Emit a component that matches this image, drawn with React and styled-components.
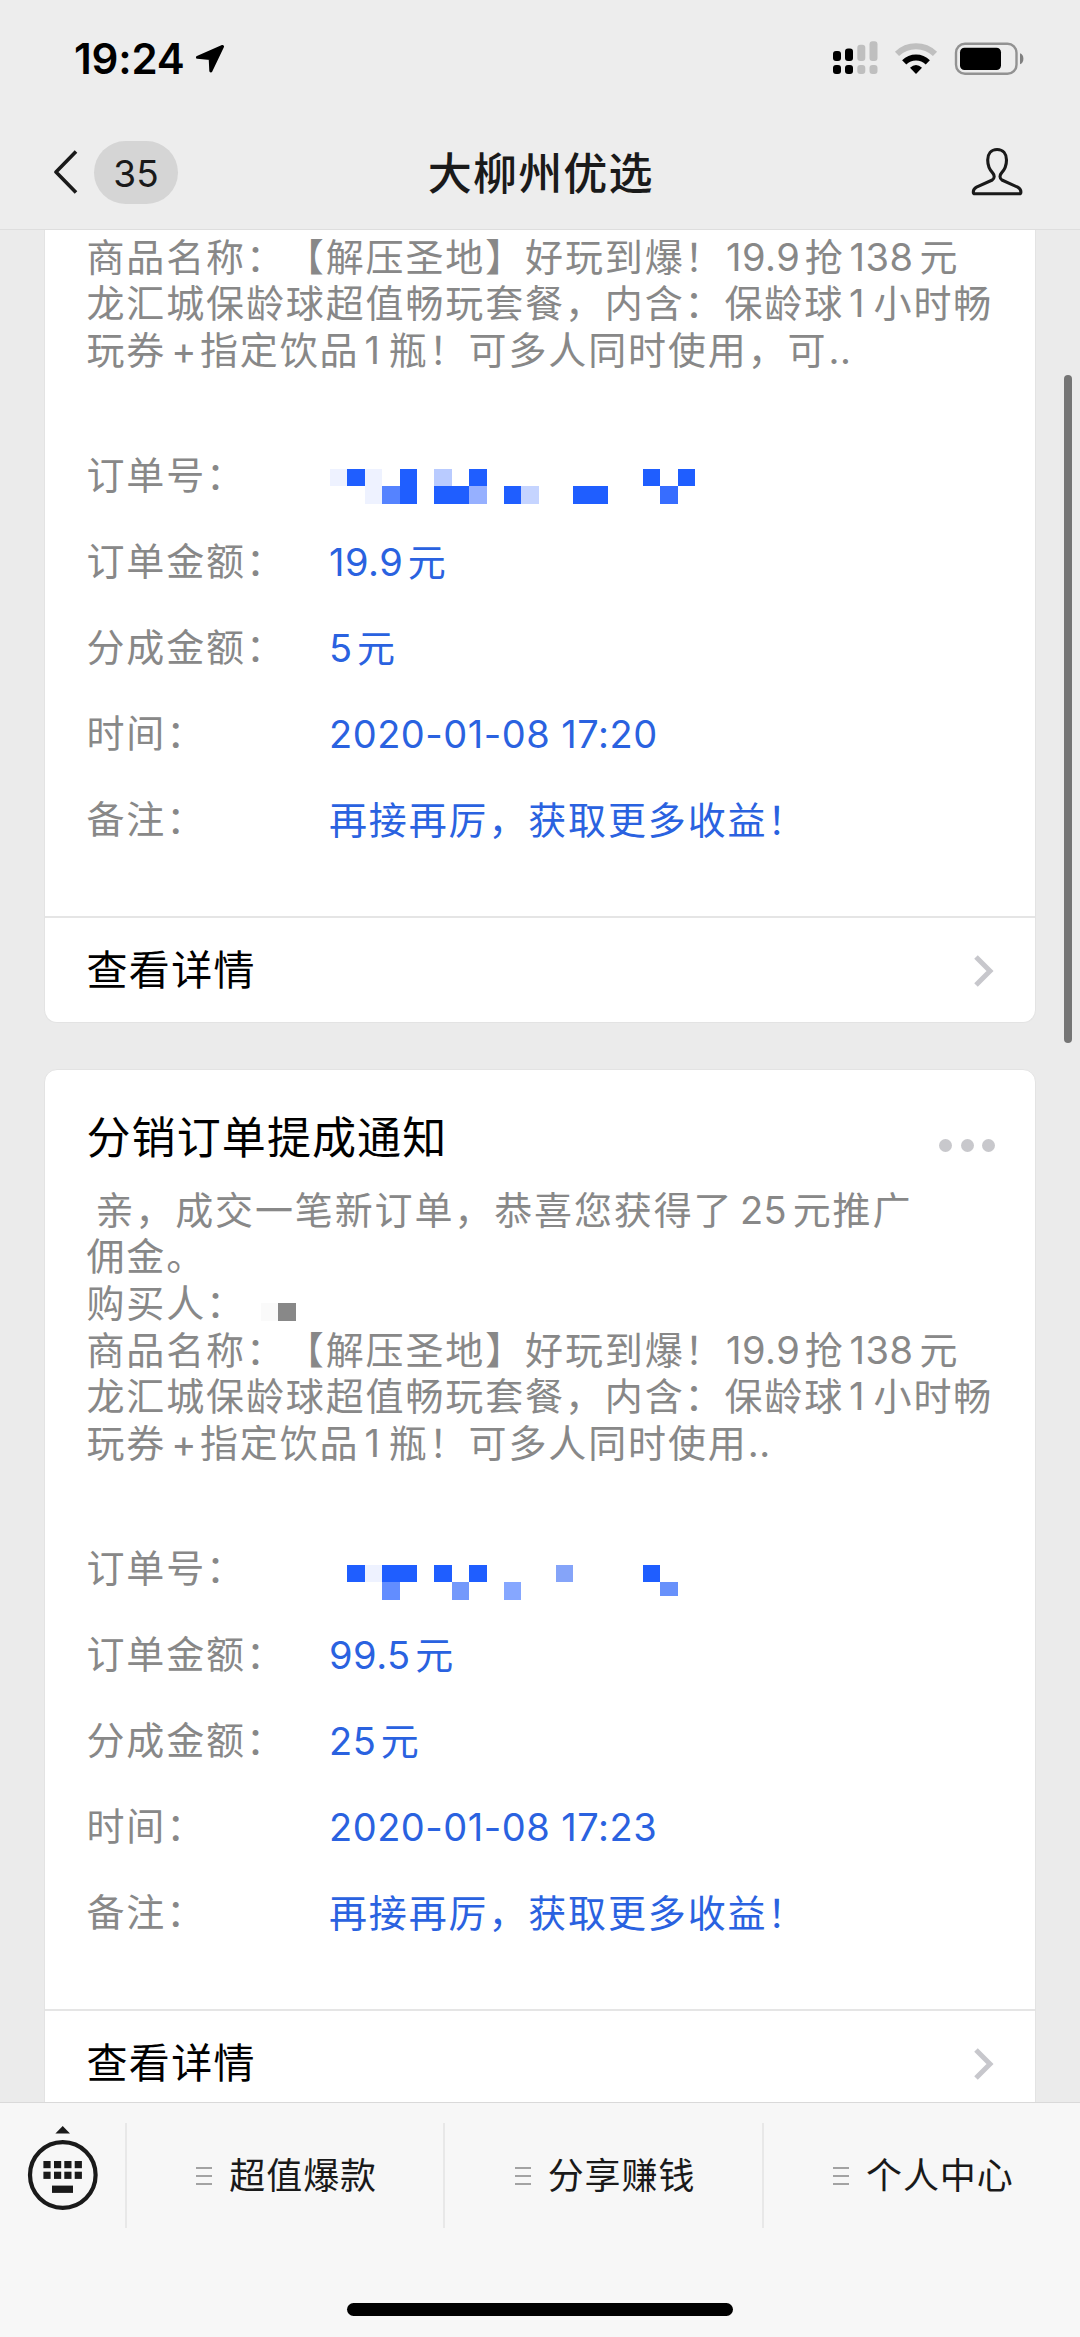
import styled, { createGlobalStyle } from "styled-components"

const BLUE = '#1f5eff'

/* [column, row, color] of every censored block */
const firstMosaic = [
    [0, 0, '#eef2ff'], [1, 0, BLUE], [2, 0, '#eef2ff'], [4, 0, BLUE], [6, 0, '#b9cbff'], [8, 0, BLUE],
    [18, 0, BLUE], [20, 0, BLUE], [2, 1, '#eef2ff'], [3, 1, '#5583ff'], [4, 1, BLUE], [6, 1, BLUE],
    [7, 1, BLUE], [8, 1, '#96b0ff'], [10, 1, BLUE], [11, 1, '#c5d4ff'], [14, 1, BLUE], [15, 1, BLUE],
    [19, 1, '#376dff'],
]
const secondMosaic = [
    [1, 0, BLUE], [2, 0, '#eef2ff'], [3, 0, BLUE], [4, 0, BLUE], [6, 0, BLUE], [8, 0, BLUE],
    [13, 0, '#85a4f9'], [18, 0, BLUE], [3, 1, '#628dff'], [7, 1, '#7499fb'], [10, 1, '#86a7ff'],
    [19, 1, '#6891fb', 14],
]

export default function App() {
    return (
        <Screen>
            <GlobalStyle />
            <StatusBar>
                <Clock>19:24 <LocationIcon /></Clock>
                <StatusIcons />
            </StatusBar>
            <NavBar>
                <BackButton>
                    <svg width="24" height="44" viewBox="0 0 24 44" fill="none" stroke="#1a1a1a" strokeWidth="3.6">
                        <path d="M22 1.5L2 22L22 42.5" strokeLinejoin="round" />
                    </svg>
                    <UnreadCount>35</UnreadCount>
                </BackButton>
                <Title>大柳州优选</Title>
                <PersonIcon />
            </NavBar>
            <MessageList>
                <Card $cut>
                    <Description>
                        <ProductName />
                        玩券<Num $after={3}>+</Num>指定饮品<Num $after={8.5}>1</Num>瓶！可多人同时使用，可<Num $before={1}>..</Num>
                    </Description>
                    <OrderRows mosaic={firstMosaic} mosaicTop={20} price="19.9" share="5" time="2020-01-08 17:20" />
                    <DetailLink />
                </Card>
                <Card>
                    <CardHeader>
                        <CardTitle>分销订单提成通知</CardTitle>
                        <MoreDots><i /><i /><i /></MoreDots>
                    </CardHeader>
                    <Description>
                        <Indent />亲，成交一笔新订单，恭喜您获得了<Num $before={6.5} $after={5.5}>25</Num>元推广<br />
                        佣金。<br />
                        购买人：<BuyerMosaic /><br />
                        <ProductName />
                        玩券<Num $after={3}>+</Num>指定饮品<Num $after={8.5}>1</Num>瓶！可多人同时使用<Num $before={0}>..</Num>
                    </Description>
                    <OrderRows mosaic={secondMosaic} mosaicTop={26} price="99.5" share="25" time="2020-01-08 17:23" />
                    <DetailLink />
                </Card>
                <ScrollThumb />
            </MessageList>
            <BottomBar>
                <Menu>
                    <KeyboardButton><KeyboardIcon /></KeyboardButton>
                    <MenuEntry text="超值爆款" />
                    <MenuEntry text="分享赚钱" />
                    <MenuEntry text="个人中心" />
                </Menu>
                <HomeIndicator />
            </BottomBar>
        </Screen>
    )
}

function ProductName() {
    return (
        <>
            商品名称：【解压圣地】好玩到爆！<Num $before={1.5}>19.9</Num>抢<Num $after={6}>138</Num>元<br />
            龙汇城保龄球超值畅玩套餐，内含：保龄球<Num $after={8.5}>1</Num>小时畅<br />
        </>
    )
}

function OrderRows({ mosaic, mosaicTop, price, share, time }) {
    return (
        <Rows>
            <Row>
                <Label>订单号：</Label>
                <Mosaic $top={mosaicTop}>
                    {mosaic.map(([column, row, color, height]) => (
                        <Block key={`${column}-${row}`} $column={column + 1} $row={row + 1} $color={color} $height={height} />
                    ))}
                </Mosaic>
            </Row>
            <Row><Label>订单金额：</Label><Value><Num $before={0}>{price}</Num>元</Value></Row>
            <Row><Label>分成金额：</Label><Value><Num $before={0}>{share}</Num>元</Value></Row>
            <Row><Label>时间：</Label><Value><Num $before={0}>{time}</Num></Value></Row>
            <Row><Label>备注：</Label><Value>再接再厉，获取更多收益！</Value></Row>
        </Rows>
    )
}

function DetailLink() {
    return (
        <CardFooter>
            查看详情
            <svg width="22" height="34" viewBox="0 0 22 34" fill="none" stroke="#c7c7cc" strokeWidth="5">
                <path d="M3 3L17 17L3 31" />
            </svg>
        </CardFooter>
    )
}

function MenuEntry({ text }) {
    return (
        <MenuItem>
            <Burger><i /><i /><i /></Burger>
            {text}
        </MenuItem>
    )
}

function LocationIcon() {
    return (
        <svg width="30" height="28" viewBox="0 0 30 28">
            <path d="M27.5 1.5L2.5 12.3L15.2 13.6L15.8 26L27.5 1.5Z" fill="#000" stroke="#000" strokeWidth="3" strokeLinejoin="round" />
        </svg>
    )
}

function StatusIcons() {
    return (
        <svg width="192" height="34" viewBox="832 41 192 34">
            <g fill="#000">
                <rect x="833" y="51" width="8" height="10" rx="3" />
                <rect x="845" y="48.5" width="8" height="12.5" rx="3" />
                <rect x="833" y="65" width="8" height="9" rx="3" />
                <rect x="845" y="65" width="8" height="9" rx="3" />
            </g>
            <g fill="#bfbfbf">
                <rect x="857.3" y="44.7" width="8" height="16.3" rx="3" />
                <rect x="869.5" y="41.3" width="8" height="19.7" rx="3" />
                <rect x="857.3" y="65" width="8" height="9" rx="3" />
                <rect x="869.5" y="65" width="8" height="9" rx="3" />
            </g>
            <path d="M897 53.8A27.5 27.5 0 0 1 935 53.8" fill="none" stroke="#bfbfbf" strokeWidth="6" />
            <path d="M904.2 62.3A17 17 0 0 1 927.8 62.3" fill="none" stroke="#000" strokeWidth="6" />
            <path d="M910 67.8Q916 62 922 67.8L916 74Z" fill="#000" />
            <rect x="956" y="43.8" width="60.5" height="30" rx="9" fill="none" stroke="#929292" strokeWidth="2.4" />
            <rect x="960" y="47.7" width="41" height="22.3" rx="4.5" fill="#000" />
            <path d="M1020 53.3Q1023.4 54.5 1023.4 58.7Q1023.4 63 1020 64.2Z" fill="#808080" />
        </svg>
    )
}

function PersonIcon() {
    return (
        <svg width="52" height="50" viewBox="970.5 147.5 52 50" fill="none" stroke="#1a1a1a" strokeWidth="3.1" strokeLinejoin="round">
            <path d="M996.6 150C990.5 150 987.2 154.6 987.2 160.5C987.2 166.5 989.3 170.5 992.3 173.6C994.2 175.7 994.2 179 991.8 180.5L976 187.7C973.6 189 972.8 190.3 972.8 192.5Q972.8 194.3 974.4 194.3H1018.9Q1020.4 194.3 1020.4 192.5C1020.4 190.3 1019.6 189 1017.2 187.7L1001.4 180.5C999 179 999 175.7 1000.9 173.6C1003.9 170.5 1006 166.5 1006 160.5C1006 154.6 1002.7 150 996.6 150Z" />
        </svg>
    )
}

function KeyboardIcon() {
    return (
        <svg width="72" height="88" viewBox="27 2125 72 88" fill="#1a1a1a">
            <path d="M55.4 2133.4L62.7 2126L70 2133.4Z" />
            <circle cx="62.8" cy="2175" r="32.8" fill="none" stroke="#1a1a1a" strokeWidth="4.2" />
            {[43.4, 54, 64.3, 74.7].map((x) => (
                <g key={x}>
                    <rect x={x} y="2161" width="7.2" height="7.2" />
                    <rect x={x} y="2171.7" width="7.2" height="7.2" />
                </g>
            ))}
            <rect x="52" y="2185.6" width="21" height="7.3" />
        </svg>
    )
}

const GlobalStyle = createGlobalStyle`
    * {
        box-sizing: border-box;
    }
    body {
        margin: 0;
        background: #ededed;
        font-family: Inter, 'Noto Sans CJK SC', sans-serif;
        text-spacing-trim: space-all;
    }
    svg {
        display: block;
        flex-shrink: 0;
    }
`

const Screen = styled.div`
    width: 1080px;
    height: 2337px;
    display: flex;
    flex-direction: column;
    overflow: hidden;
    background: #ebebeb;
`
const StatusBar = styled.div`
    height: 115px;
    padding: 41px 56px 0 74px;
    display: flex;
    justify-content: space-between;
    align-items: flex-start;
    background: #ededed;
`
const Clock = styled.div`
    display: flex;
    align-items: center;
    gap: 10px;
    font-size: 42px;
    font-weight: 600;
    line-height: 36px;
    letter-spacing: -0.2px;
    color: #000;
`
const NavBar = styled.div`
    height: 115px;
    padding: 0 57.5px 0 54px;
    display: grid;
    grid-template-columns: 1fr auto 1fr;
    align-items: center;
    background: #ededed;
    border-bottom: 1px solid #dedede;
    > svg {
        justify-self: end;
    }
`
const BackButton = styled.div`
    display: flex;
    align-items: center;
    gap: 16px;
`
const UnreadCount = styled.div`
    width: 84px;
    height: 63px;
    border-radius: 32px;
    background: #d5d5d5;
    color: #1a1a1a;
    font-size: 37px;
    line-height: 65px;
    text-align: center;
`
const Title = styled.div`
    padding: 3px 0 0 5px;
    font-size: 44px;
    font-weight: 500;
    line-height: 60px;
    letter-spacing: 1.2px;
    color: #1a1a1a;
`
const MessageList = styled.div`
    height: 1872px;
    padding: 0 44px;
    display: flex;
    flex-direction: column;
    gap: 46px;
    overflow: hidden;
    position: relative;
`
const Card = styled.div`
    flex-shrink: 0;
    background: #fff;
    border: 1px solid #e3e3e3;
    border-top-width: ${({ $cut }) => $cut ? 0 : 1}px;
    border-radius: ${({ $cut }) => $cut ? '0 0 13px 13px' : '13px'};
    padding-top: ${({ $cut }) => $cut ? 3.5 : 0}px;
`
const CardHeader = styled.div`
    height: 116.5px;
    padding: 36px 40px 0 41.5px;
    display: flex;
    justify-content: space-between;
`
const CardTitle = styled.div`
    font-size: 44px;
    line-height: 64px;
    letter-spacing: 1.1px;
    color: #000;
`
const MoreDots = styled.div`
    display: flex;
    gap: 8.5px;
    padding-top: 33px;
    i {
        width: 13px;
        height: 13px;
        border-radius: 50%;
        background: #c8c8cc;
    }
`
const Description = styled.div`
    padding-left: 41.5px;
    font-size: 38px;
    line-height: 46.6px;
    letter-spacing: 1.87px;
    white-space: nowrap;
    color: #888;
`
const Num = styled.span`
    letter-spacing: 0.5px;
    margin-left: ${({ $before = 5 }) => $before}px;
    margin-right: ${({ $after = 4.5 }) => $after}px;
`
const Indent = styled.span`
    display: inline-block;
    width: 9px;
`
const BuyerMosaic = styled.span`
    display: inline-block;
    width: 35px;
    height: 18px;
    margin-left: 15px;
    vertical-align: -4px;
    background: linear-gradient(90deg, #fafafa 17.5px, #888 17.5px);
`
const Rows = styled.div`
    padding: 60px 0 53.5px 41.5px;
`
const Row = styled.div`
    height: 85.9px;
    display: flex;
    align-items: center;
    font-size: 38px;
    line-height: 46px;
    letter-spacing: 1.85px;
    white-space: nowrap;
`
const Label = styled.div`
    width: 242.5px;
    flex-shrink: 0;
    padding-bottom: 1.5px;
    color: #888;
`
const Value = styled.div`
    color: #2a62e0;
`
const Mosaic = styled.div`
    display: grid;
    grid-template-columns: repeat(21, 17.4px);
    grid-template-rows: repeat(2, 17.4px);
    margin: ${({ $top }) => $top}px 0 0 1px;
`
const Block = styled.div`
    grid-column: ${({ $column }) => $column};
    grid-row: ${({ $row }) => $row};
    height: ${({ $height = 17.4 }) => $height}px;
    background: ${({ $color }) => $color};
`
const CardFooter = styled.div`
    height: 106px;
    padding: 0 40px 1px 41.5px;
    display: flex;
    justify-content: space-between;
    align-items: center;
    border-top: 2px solid #e5e5e5;
    font-size: 41px;
    line-height: 50px;
    letter-spacing: 1.35px;
    color: #000;
    svg {
        margin-top: 2px;
    }
`
const ScrollThumb = styled.div`
    position: absolute;
    top: 145px;
    right: 8px;
    width: 8px;
    height: 668px;
    border-radius: 4px;
    background: #757575;
`
const BottomBar = styled.div`
    flex: 1;
    display: flex;
    flex-direction: column;
    align-items: center;
    justify-content: space-between;
    padding: 20px 0 21px;
    background: #f7f7f7;
    border-top: 1px solid #d9d9d9;
`
const Menu = styled.div`
    width: 100%;
    height: 105px;
    display: flex;
`
const KeyboardButton = styled.div`
    width: 125px;
    padding: 2px 0 0 27px;
`
const MenuItem = styled.div`
    flex: 1;
    display: flex;
    align-items: center;
    justify-content: center;
    gap: 17px;
    padding-left: 3px;
    border-left: 2px solid #e8e8e8;
    font-size: 36px;
    line-height: 44px;
    letter-spacing: 0.9px;
    color: #1a1a1a;
`
const Burger = styled.div`
    width: 16px;
    display: flex;
    flex-direction: column;
    gap: 6px;
    i {
        height: 2px;
        background: #a3a3a3;
    }
`
const HomeIndicator = styled.div`
    width: 386px;
    height: 13px;
    border-radius: 7px;
    background: #000;
`
